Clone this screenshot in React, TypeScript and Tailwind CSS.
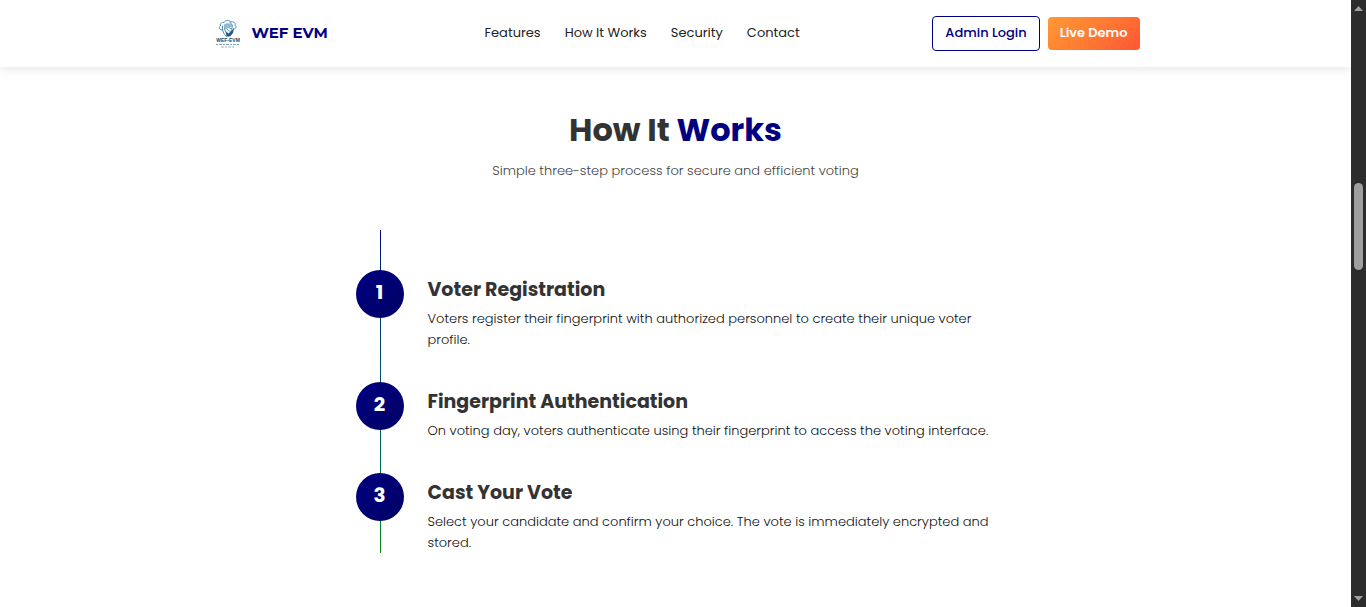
const steps = [
  {
    title: "Voter Registration",
    text: "Voters register their fingerprint with authorized personnel to create their unique voter profile.",
  },
  {
    title: "Fingerprint Authentication",
    text: "On voting day, voters authenticate using their fingerprint to access the voting interface.",
  },
  {
    title: "Cast Your Vote",
    text: "Select your candidate and confirm your choice. The vote is immediately encrypted and stored.",
  },
];

const links = [
  { label: "Features", href: "#features" },
  { label: "How It Works", href: "#how-it-works" },
  { label: "Security", href: "#security" },
  { label: "Contact", href: "#contact" },
];

function Logo() {
  return (
    <svg viewBox="0 0 32 32" className="h-8 w-8" aria-hidden="true">
      <g fill="none" stroke="#3c83ac" strokeWidth="0.9" strokeLinecap="round" strokeLinejoin="round">
        <path d="M10.500 12C7 12 6.500 9 8.500 8C7.500 5.500 10 4 12 4.500C13 2 17.500 1.800 19 4C21.500 3 24 5 23.200 7.500C25 9 23.500 11.500 21.500 11" />
        <path d="M10.500 8C10 12.500 11.500 16 14.500 18.500M12.500 7C11.800 11 13.200 14 16 16M14.500 6.500C13.800 9.500 15 12 18 13.500M17 6C15.500 8.500 17 10.500 19.500 11M20 7V12L16.500 18M18 4L20.500 8" />
      </g>
      <path d="M12 7L15 5L20 6.500L19 9L15.500 10L13 12Z" fill="#8dbbd6" />
      <path d="M13.500 13L16.500 15.500L22 10.500L21 15L18 18.500H14.500Z" fill="#245b84" />
      <text x="16" y="24" textAnchor="middle" fontSize="5" fontWeight="700" fill="#174765" fontFamily="Liberation Sans, sans-serif">WEF-EVM</text>
      <path d="M4 26.500H28" stroke="#7797ab" strokeWidth="0.900" strokeDasharray="2 1 3 1" />
      <path d="M9 29H23" stroke="#93abba" strokeWidth="0.900" strokeDasharray="3 1 2 1" />
    </svg>
  );
}

function Scrollbar() {
  return (
    <div aria-hidden="true" className="sticky top-0 flex h-screen w-[15px] shrink-0 flex-col items-center bg-[#2c2c2c] py-1.5">
      <svg viewBox="0 0 9 5" className="h-[5px] w-[9px]"><path d="M4.500 0L9 5H0Z" fill="#a0a0a0" /></svg>
      <div className="grow-[172]" />
      <div className="h-[87px] w-[9px] rounded-full bg-[#9f9f9f]" />
      <div className="grow-[325]" />
      <svg viewBox="0 0 9 5" className="h-[5px] w-[9px]"><path d="M0 0H9L4.500 5Z" fill="#a0a0a0" /></svg>
    </div>
  );
}

export default function App() {
  return (
    <div className="flex min-h-screen bg-white font-['Poppins','Inter',sans-serif] text-[#333333]">
      <div className="min-w-0 flex-1">
        <header className="bg-white shadow-[0_2px_10px_rgba(0,0,0,0.1)]">
          <div className="mx-auto flex h-[67px] max-w-[928px] items-center justify-between">
            <a href="#home" className="flex items-center gap-2 text-[15px] font-bold text-[#000080]">
              <Logo />
              <span className="font-['Montserrat','Inter',sans-serif]">WEF EVM</span>
            </a>
            <nav className="ml-6 flex gap-6 pb-0.5 text-[13px] font-normal text-[#222222]">
              {links.map((link) => (
                <a key={link.href} href={link.href}>{link.label}</a>
              ))}
            </nav>
            <div className="flex items-center gap-2 text-[13px] font-medium">
              <button className="h-[35px] rounded border border-[#000080] px-3 pb-0.5 text-[#000080]">Admin Login</button>
              <button className="h-[33px] rounded bg-linear-135 from-[#ff9933] to-[#ff5533] px-3 pb-0.5 font-semibold text-white">Live Demo</button>
            </div>
          </div>
        </header>
        <main id="how-it-works" className="px-6 pt-[43px] pb-[53px]">
          <div className="text-center">
            <h2 className="text-[32px] leading-10 font-bold">
              How It <span className="text-[#000080]">Works</span>
            </h2>
            <p className="mt-2.5 text-[13px] leading-[21px] font-light text-[#444444]">Simple three-step process for secure and efficient voting</p>
          </div>
          <div className="relative mx-auto mt-[49px] max-w-[640px] pt-10">
            <div className="absolute inset-y-0 left-6 w-px bg-linear-to-b from-[#000080] to-[#138808]" />
            <ol className="flex flex-col gap-8">
              {steps.map((step, index) => (
                <li key={step.title} className="relative flex items-start gap-6">
                  <div className="flex h-12 w-12 shrink-0 items-center justify-center rounded-full bg-linear-135 from-[#000080] to-[#000066] pb-1 text-xl font-bold text-white">
                    {index + 1}
                  </div>
                  <div className="pt-2">
                    <h3 className="text-[19px] leading-6 font-bold">{step.title}</h3>
                    <p className="mt-1.5 text-[13px] leading-[21px] font-light text-[#111111]">{step.text}</p>
                  </div>
                </li>
              ))}
            </ol>
          </div>
        </main>
      </div>
      <Scrollbar />
    </div>
  );
}
